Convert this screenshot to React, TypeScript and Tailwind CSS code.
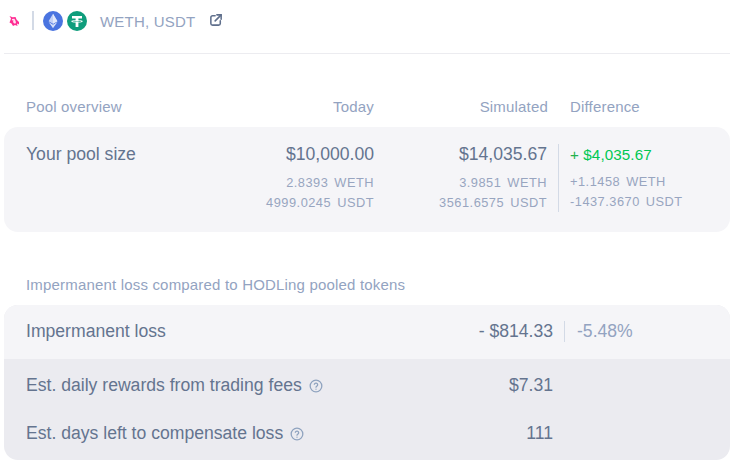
function Help() {
  return (
    <svg className="w-[14px] h-[14px] ml-[7px] mt-[2px] text-[#8fa3bf]" viewBox="0 0 24 24" fill="none" stroke="currentColor" strokeWidth="2.2" strokeLinecap="round" strokeLinejoin="round">
      <circle cx="12" cy="12" r="10" />
      <path d="M9.1 9a3 3 0 0 1 5.8 1c0 2-2.9 2.6-2.9 4" />
      <path d="M12 17.5h.01" />
    </svg>
  );
}

function OpenLink() {
  return (
    <svg className="ml-[15px] w-[12px] h-[12px] mt-[3px] text-[#5f6f8c]" viewBox="0 0 14 14" fill="none" stroke="currentColor" strokeWidth="1.8" strokeLinecap="round" strokeLinejoin="round">
      <path d="M6 2 H3 A2 2 0 0 0 1 4 V11 A2 2 0 0 0 3 13 H10 A2 2 0 0 0 12 11 V8" />
      <path d="M8 1 H13 V6" />
      <path d="M13 1 L6 8" />
    </svg>
  );
}

function Unicorn() {
  return (
    <svg className="w-[12px] h-[12px]" viewBox="0 0 12 12">
      <path d="M1.5 1 L4.5 2.2 L7.5 2 L8.5 4.5 L11 7 L11 9.5 L9 8.5 L9.5 11 L7 10 L5 11 L3.5 8.5 L1.5 7.5 L2.5 5 L3 3.5 Z" fill="#ff2d93" />
      <path d="M3.8 4 L6.4 3.8 L7.6 6 L8 8.2 L6.2 8.6 L5 7 L5.6 5.6 L4.4 5.6 Z" fill="#ffe3f1" />
    </svg>
  );
}

function EthIcon() {
  return (
    <svg className="w-5 h-5" viewBox="0 0 20 20">
      <circle cx="10" cy="10" r="10" fill="#4a74e0" />
      <path d="M10 2.8 L5.6 10.2 L10 12.8 L14.4 10.2 Z" fill="#c3d1f6" />
      <path d="M10 2.8 L14.4 10.2 L10 12.8 Z" fill="#e2e9fb" />
      <path d="M5.6 11.1 L10 17.2 L14.4 11.1 L10 13.7 Z" fill="#d5dff8" />
    </svg>
  );
}

function TetherIcon() {
  return (
    <svg className="w-5 h-5" viewBox="0 0 20 20">
      <circle cx="10" cy="10" r="10" fill="#0f9d7c" />
      <path d="M5 5 H15 V7.4 H11.4 V9 C13.6 9.1 15.8 9.6 15.8 10.3 C15.8 11 13.6 11.5 11.4 11.6 V16 H8.6 V11.6 C6.4 11.5 4.2 11 4.2 10.3 C4.2 9.6 6.4 9.1 8.6 9 V7.4 H5 Z" fill="#ffffff" />
      <path d="M8.6 9.7 C7 9.8 5.6 10 5.6 10.3 C5.6 10.6 7.6 10.9 10 10.9 C12.4 10.9 14.4 10.6 14.4 10.3 C14.4 10 13 9.8 11.4 9.7 V10.4 H8.6 Z" fill="#0f9d7c" />
    </svg>
  );
}

const sub = "text-[12.8px] leading-[20px] text-[#98a5c0] tracking-[0.5px] [word-spacing:2px]";

export default function App() {
  return (
    <div className="w-[736px] h-[464px] bg-white overflow-hidden pl-1 pr-[6px] text-[#64748f] [font-family:'Liberation_Sans',Arial,sans-serif]">
      {/* header */}
      <div className="h-[54px] border-b border-[#ececf0] flex items-start pt-[11px]">
        <div className="ml-[4px] w-[12px] h-[20px] flex items-center"><Unicorn /></div>
        <div className="ml-[12px] w-[2px] h-[19px] bg-[#d3dae6]" />
        <div className="ml-[9px] flex gap-1"><EthIcon /><TetherIcon /></div>
        <span className="ml-[13px] text-[15px] leading-[21px] text-[#93a3c1] tracking-[0.2px]">WETH, USDT</span>
        <OpenLink />
      </div>

      {/* pool overview */}
      <div className="mt-[43px] h-[20px] flex text-[15px] leading-[20px] text-[#93a3c1] tracking-[0.18px]">
        <div className="pl-[22px] w-[250px]">Pool overview</div>
        <div className="w-[120px] text-right">Today</div>
        <div className="w-[174px] text-right">Simulated</div>
        <div className="pl-[22px]">Difference</div>
      </div>
      <div className="mt-[10px] h-[105px] bg-[#f5f5f8] rounded-[14px] flex pt-[16px]">
        <div className="pl-[22px] w-[250px] text-[17.6px] leading-[22px]">Your pool size</div>
        <div className="w-[120px] text-right">
          <div className="text-[17.6px] leading-[22px]">$10,000.00</div>
          <div className={`mt-[8px] ${sub}`}>2.8393 WETH</div>
          <div className={sub}>4999.0245 USDT</div>
        </div>
        <div className="w-[174px] text-right pr-px">
          <div className="text-[17.6px] leading-[22px]">$14,035.67</div>
          <div className={`mt-[8px] ${sub}`}>3.9851 WETH</div>
          <div className={sub}>3561.6575 USDT</div>
        </div>
        <div className="ml-[10px] mt-[1px] h-[68px] pl-[11px] border-l border-[#d3dae6]">
          <div className="text-[15.2px] leading-[22px] tracking-[0.1px] text-[#00c853]"><span className="text-[#22b14c]">+</span> $4,035.67</div>
          <div className={`mt-[6px] ${sub}`}>+1.1458 WETH</div>
          <div className={sub}>-1437.3670 USDT</div>
        </div>
      </div>

      {/* impermanent loss */}
      <div className="mt-[43px] pl-[22px] h-[20px] text-[15px] leading-[20px] text-[#93a3c1] tracking-[0.18px]">Impermanent loss compared to HODLing pooled tokens</div>
      <div className="mt-[10px] rounded-[14px] overflow-hidden bg-[#ebebf0] text-[17.6px] leading-[22px]">
        <div className="h-[54px] bg-[#f5f5f8] flex items-center pl-[22px] pb-[2px]">
          <div className="flex-1">Impermanent loss</div>
          <div className="w-[220px] text-right">- $814.33</div>
          <div className="ml-[11px] h-[21px] leading-[20px] pl-[12px] border-l border-[#d3dae6] w-[166px] text-[#93a3c1]">-5.48%</div>
        </div>
        <div className="h-[53px] flex items-center pl-[22px] pb-[2px]">
          <div className="flex-1 flex items-center">Est. daily rewards from trading fees<Help /></div>
          <div className="w-[120px] text-right mr-[177px]">$7.31</div>
        </div>
        <div className="h-[48px] flex items-start pl-[22px] pt-[10px]">
          <div className="flex-1 flex items-center">Est. days left to compensate loss<Help /></div>
          <div className="w-[120px] text-right mr-[177px]">111</div>
        </div>
      </div>
    </div>
  );
}
